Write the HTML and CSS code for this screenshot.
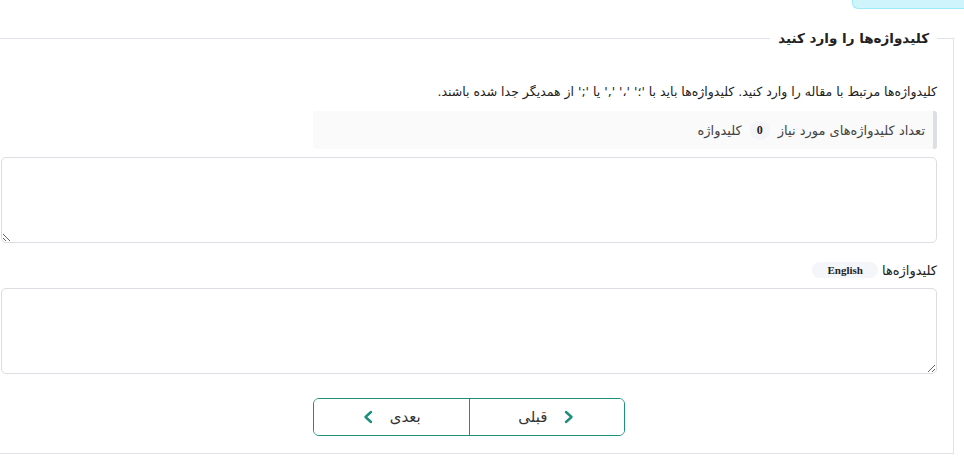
FILE: index.html
```html
<!DOCTYPE html>
<html lang="fa" dir="rtl">
<head>
<meta charset="utf-8">
<link rel="stylesheet" href="styles.css">
</head>
<body>
<div class="top-strip"><div class="info-tab"></div></div>
<fieldset class="panel">
  <legend class="panel-title">کلیدواژه‌ها را وارد کنید</legend>
  <p class="hint">کلیدواژه‌ها مرتبط با مقاله را وارد کنید. کلیدواژه‌ها باید با '؛' '،' ',' یا ';' از همدیگر جدا شده باشند.</p>
  <div class="count-box">
    <span>تعداد کلیدواژه‌های مورد نیاز</span>
    <span class="num-badge">0</span>
    <span>کلیدواژه</span>
  </div>
  <textarea class="field field-fa"></textarea>
  <div class="label-row">
    <span>کلیدواژه‌ها</span>
    <span class="lang-badge">English</span>
  </div>
  <textarea class="field field-en" dir="ltr"></textarea>
  <div class="nav-wrap">
    <div class="nav-group">
      <button class="nav-btn" type="button">
        <svg width="12" height="14" viewBox="0 0 12 14"><path d="M3 2 L8.5 7 L3 12" fill="none" stroke="#1b8f7c" stroke-width="2.4" stroke-linecap="round" stroke-linejoin="round"/></svg>
        <span>قبلی</span>
      </button>
      <button class="nav-btn" type="button">
        <span>بعدی</span>
        <svg width="12" height="14" viewBox="0 0 12 14"><path d="M9 2 L3.5 7 L9 12" fill="none" stroke="#1b8f7c" stroke-width="2.4" stroke-linecap="round" stroke-linejoin="round"/></svg>
      </button>
    </div>
  </div>
</fieldset>
</body>
</html>
```

FILE: styles.css
```css
html, body {
  margin: 0;
  padding: 0;
  background: #ffffff;
  overflow: hidden;
}
body {
  font-family: "DejaVu Sans", "Noto Sans", sans-serif;
  color: #222;
  direction: rtl;
}
.top-strip {
  height: 10px;
  display: flex;
}
.info-tab {
  width: 111px;
  height: 8px;
  background: #cff4fc;
  border: 1px solid #9eeaf9;
  border-top: none;
  border-right: none;
  border-bottom-left-radius: 6px;
}
.panel {
  margin: 18px 10px 0 -16px;
  padding: 0 16px 0 16px;
  border: 1px solid #e1e1e8;
  border-radius: 0;
  height: 426px;
  box-sizing: border-box;
  min-width: 0;
}
.panel-title {
  padding: 0 8px;
  font-size: 13.5px;
  font-weight: bold;
  color: #222;
  line-height: 20px;
}
.hint {
  margin: 35px 0 0 0;
  font-size: 12.5px;
  line-height: 18px;
  color: #222;
}
.count-box {
  margin-top: 10px;
  width: 624px;
  height: 38px;
  box-sizing: border-box;
  background: #fafafa;
  border-right: 4px solid #dcdfe3;
  border-radius: 3px;
  display: flex;
  align-items: center;
  gap: 8px;
  padding-right: 8px;
  font-size: 13px;
  color: #444;
}
.num-badge {
  font-family: "Liberation Serif", serif;
  font-weight: bold;
  font-size: 12px;
  background: #f3f5f8;
  color: #222;
  border-radius: 10px;
  padding: 2px 7px;
}
.field {
  display: block;
  width: 100%;
  height: 86px;
  box-sizing: border-box;
  border: 1px solid #dcdce2;
  border-radius: 5px;
  background: #fff;
  margin: 0;
  padding: 6px 10px;
  resize: vertical;
  font-family: inherit;
}
.field-fa {
  margin-top: 8px;
}
.label-row {
  margin-top: 15px;
  height: 24px;
  display: flex;
  align-items: center;
  gap: 4px;
  font-size: 13px;
  color: #222;
}
.lang-badge {
  font-family: "Liberation Serif", serif;
  font-weight: bold;
  font-size: 11px;
  background: #f4f6f9;
  border-radius: 9px;
  padding: 2px 15px;
  color: #222;
}
.field-en {
  margin-top: 6px;
}
.nav-wrap {
  display: flex;
  justify-content: center;
  margin-top: 24px;
}
.nav-group {
  display: flex;
  width: 312px;
  height: 38px;
  box-sizing: border-box;
  border: 1.5px solid #1b8f7c;
  border-radius: 6px;
  overflow: hidden;
}
.nav-btn {
  flex: 1;
  display: flex;
  align-items: center;
  justify-content: center;
  gap: 16px;
  background: #fff;
  border: none;
  margin: 0;
  padding: 0;
  font-family: inherit;
  font-size: 15px;
  color: #333;
}
.nav-btn + .nav-btn {
  border-right: 1.5px solid #1b8f7c;
}
```
